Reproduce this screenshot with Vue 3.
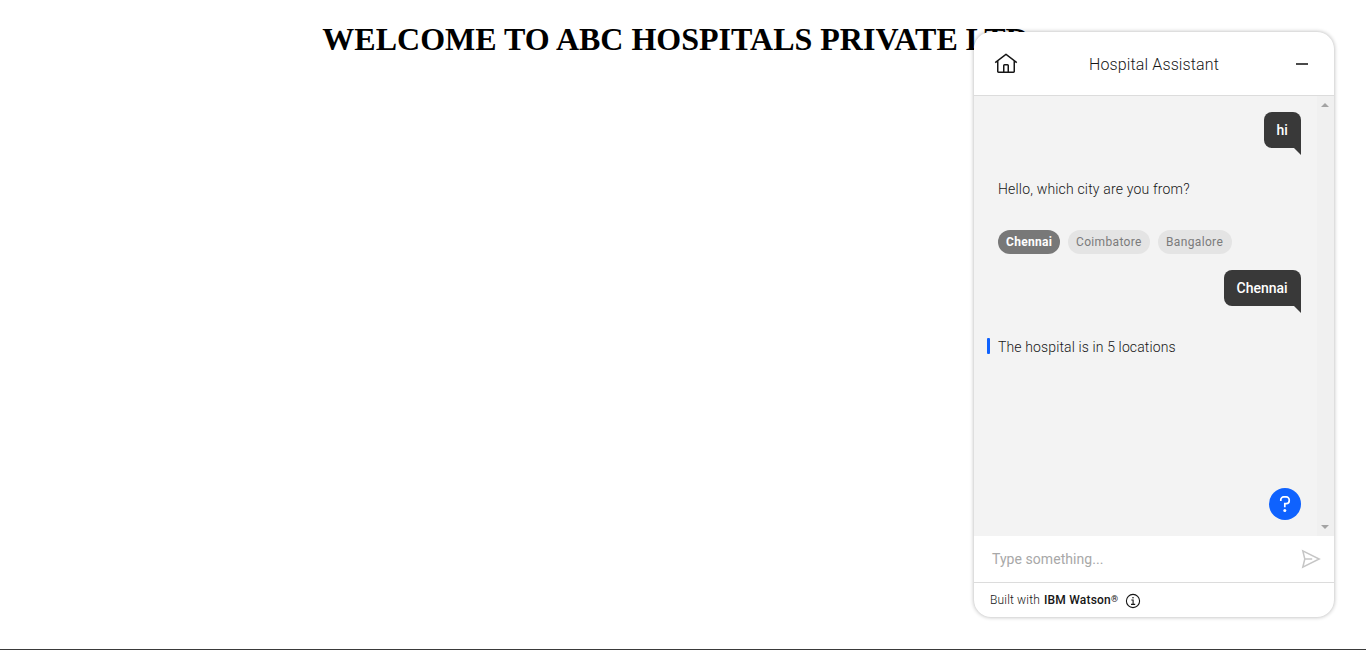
<script setup>
const cities = [
  { name: 'Chennai', cls: 'c1 selected' },
  { name: 'Coimbatore', cls: 'c2' },
  { name: 'Bangalore', cls: 'c3' },
]
</script>

<template>
  <div class="page">
    <h1>WELCOME TO ABC HOSPITALS PRIVATE LTD</h1>

    <section class="chat">
      <header>
        <svg class="home" width="24" height="24" viewBox="0 0 32 32" fill="#161616">
          <path d="M16.6123,2.2138a1.01,1.01,0,0,0-1.2427,0L1,13.4194l1.2427,1.5717L4,13.6209V26a2.0041,2.0041,0,0,0,2,2H26a2.0037,2.0037,0,0,0,2-2V13.63L29.7573,15,31,13.4282ZM18,26H14V18h4Zm2,0V18a2.0023,2.0023,0,0,0-2-2H14a2.002,2.002,0,0,0-2,2v8H6V12.0615l10-7.79,10,7.8005V26Z" />
        </svg>
        <div class="title"><span>Hospital Assistant</span></div>
        <div class="minimize"></div>
      </header>

      <main>
        <div class="messages">
          <div class="bubble hi"><span>hi</span></div>
          <p class="question"><span>Hello, which city are you from?</span></p>
          <div class="chips">
            <div v-for="c in cities" :key="c.name" class="chip" :class="c.cls"><span>{{ c.name }}</span></div>
          </div>
          <div class="bubble city"><span>Chennai</span></div>
          <div class="answer"><i></i><span>The hospital is in 5 locations</span></div>
          <div class="help">
            <svg width="32" height="32" viewBox="0 0 32 32" fill="none" stroke="#fff" stroke-width="1.7">
              <path d="M11.8 13V11.8A2.9 2.9 0 0 1 14.7 8.9H17.3A2.9 2.9 0 0 1 20.2 11.8V12.7A2.9 2.9 0 0 1 17.3 15.6H15.8V19.3" />
              <circle cx="15.8" cy="22.5" r="1.5" fill="#fff" stroke="none" />
            </svg>
          </div>
        </div>
        <div class="scrollbar">
          <svg width="8" height="4" viewBox="0 0 8 4"><path d="M0 4L4 0L8 4Z" fill="#a3a3a3" /></svg>
          <svg width="8" height="4" viewBox="0 0 8 4"><path d="M0 0L4 4L8 0Z" fill="#a3a3a3" /></svg>
        </div>
      </main>

      <div class="entry">
        <span class="placeholder">Type something...</span>
        <svg class="send" width="20" height="20" viewBox="0 0 20 20" fill="none" stroke="#c6c6c6" stroke-width="1.5">
          <path d="M1.8 1.8L18.2 10L1.8 18.2L3.8 10ZM3.8 10H11.2" />
        </svg>
      </div>

      <footer>
        <span class="built">Built with</span>
        <b>IBM Watson<sup>®</sup></b>
        <svg width="16" height="16" viewBox="0 0 16 16" fill="none" stroke="#161616">
          <circle cx="8" cy="8" r="6.6" stroke-width="1.1" />
          <path d="M6.3 7H8.1V11.3M6 11.4H10.2" stroke-width="1.1" />
          <circle cx="8" cy="4.7" r=".8" fill="#161616" stroke="none" />
        </svg>
      </footer>
    </section>
  </div>
</template>

<style>
body { margin: 0; overflow: hidden; background: #fff; }
</style>

<style scoped>
* { box-sizing: border-box; }
.page {
  position: relative;
  height: 650px;
  border-bottom: 1px solid #3a3a3a;
  font-family: Roboto, "Liberation Sans", sans-serif;
  color: #262626;
  overflow: hidden;
}
h1 {
  margin: 0;
  padding: 21px 15px 0 0;
  font: bold 32px/37px "Liberation Serif", serif;
  text-align: center;
  color: #000;
  white-space: nowrap;
}
span, b { white-space: nowrap; }
.chat {
  position: absolute;
  left: 974px;
  top: 32px;
  width: 360px;
  height: 585px;
  display: flex;
  flex-direction: column;
  background: #fff;
  border-radius: 17px;
  box-shadow: 0 0 4px rgba(0, 0, 0, .32);
  overflow: hidden;
}
header {
  height: 64px;
  flex: none;
  display: flex;
  align-items: center;
  border-bottom: 1px solid #dcdcdc;
  padding: 0 26px 0 20px;
}
.title { flex: 1; padding: 2px 0 0 71px; font-size: 16px; line-height: 20px; font-weight: 300; letter-spacing: .13px; color: #161616; }
.minimize { width: 12px; height: 2px; background: #4a4a4a; margin-top: 1px; }
main { height: 440px; flex: none; display: flex; background: #f3f3f3; }
.messages { width: 343px; padding: 16px 16px 0 24px; display: flex; flex-direction: column; font-size: 14px; }
.bubble {
  position: relative;
  align-self: flex-end;
  height: 36px;
  padding-left: 12.5px;
  line-height: 37px;
  background: #393939;
  color: #fff;
  border-radius: 8px 8px 0 8px;
  font-weight: 500;
}
.bubble::after {
  content: "";
  position: absolute;
  right: 0;
  top: 36px;
  width: 7px;
  height: 7px;
  background: #393939;
  clip-path: polygon(0 0, 100% 0, 100% 100%);
}
.hi { width: 37px; }
.city { width: 77px; margin-top: 16px; }
.question { margin: 31px 0 0; line-height: 20px; letter-spacing: .18px; font-weight: 300; color: #161616; }
.chips { display: flex; gap: 8px; margin-top: 31px; }
.chip {
  height: 24px;
  padding-left: 8px;
  border-radius: 12px;
  background: #e4e4e4;
  color: #7b7b7b;
  font-size: 12px;
  line-height: 24px;
  letter-spacing: .35px;
}
.c1 { width: 62px; }
.c2 { width: 82px; }
.c3 { width: 74px; }
.selected { background: #787878; color: #fff; font-weight: 700; letter-spacing: .3px; }
.answer { display: flex; align-items: center; height: 20px; margin: 31px 0 0 -11px; line-height: 20px; font-weight: 300; letter-spacing: .13px; color: #161616; }
.answer i { width: 3px; height: 16px; margin: -2px 8px 0 0; background: #0f62fe; border-radius: 1px; }
.help { align-self: flex-end; width: 32px; height: 32px; margin-top: 131px; border-radius: 50%; background: #0f62fe; }
.help svg { display: block; }
.scrollbar { width: 17px; background: #f0f0f0; display: flex; flex-direction: column; align-items: flex-start; justify-content: space-between; padding: 7px 0 7px 4px; }
.entry { height: 47px; flex: none; display: flex; align-items: center; justify-content: space-between; padding: 0 13px 0 18px; border-bottom: 1px solid #dcdcdc; }
.placeholder { color: #a8a8a8; font-size: 14px; letter-spacing: .06px; }
footer { display: flex; align-items: center; height: 34px; padding-left: 16px; font-size: 12px; }
.built { font-weight: 300; letter-spacing: .16px; color: #161616; width: 51px; }
footer b { margin-left: 3px; color: #161616; font-weight: 500; letter-spacing: .2px; width: 73px; }
sup { font-size: 9px; line-height: 0; vertical-align: 2px; }
footer svg { margin: 1px 0 0 8px; }
</style>
